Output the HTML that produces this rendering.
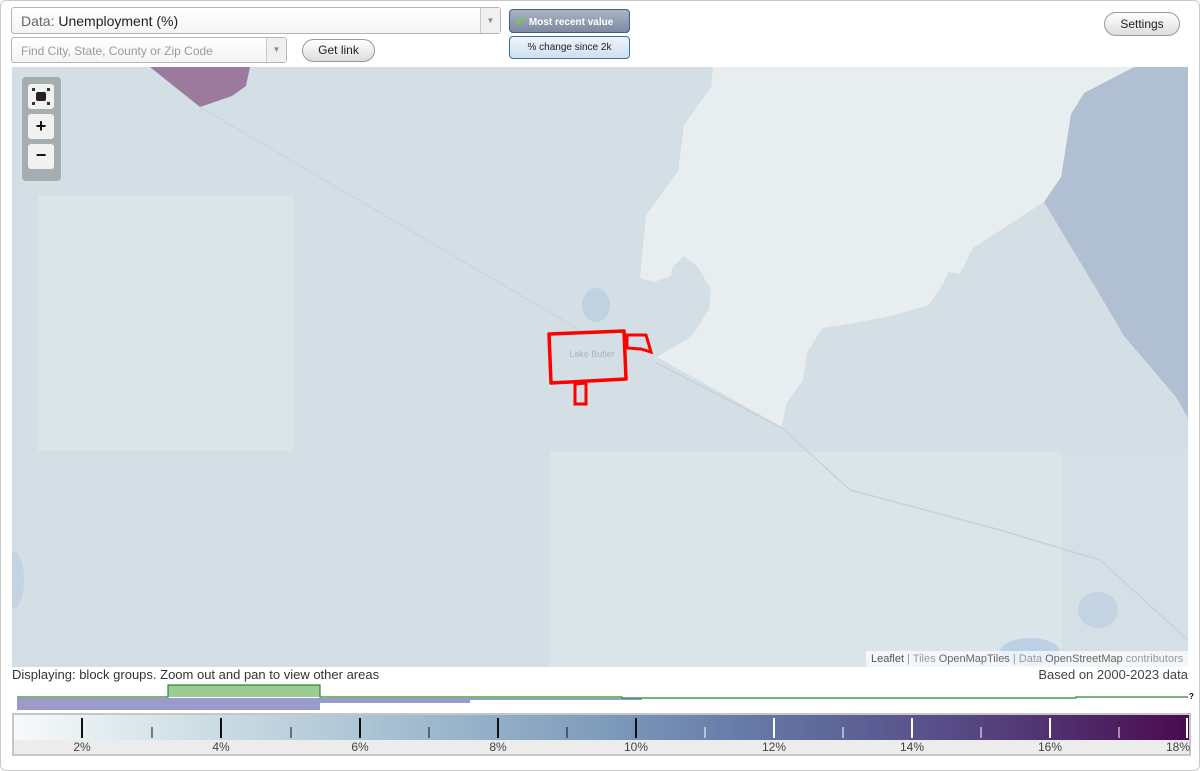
<!DOCTYPE html>
<html><head><meta charset="utf-8"><style>
*{box-sizing:border-box;margin:0;padding:0}
body{width:1200px;height:771px;background:#fff;font-family:"Liberation Sans",sans-serif;position:relative;overflow:hidden}
.frame{position:absolute;left:0;top:0;width:1200px;height:771px;border:1px solid #c8c8c8;border-radius:6px}
.abs{position:absolute}
.sel{border:1px solid #b5b5b5;border-radius:3px;background:linear-gradient(#fff,#f4f4f4);}
.arr{position:absolute;right:0;top:0;bottom:0;width:20px;border-left:1px solid #ccc;background:#f0f0f0;color:#888;font-size:8px;text-align:center}
.pill{border:1px solid #999;border-radius:12px;background:linear-gradient(#fff,#ddd);font-size:12px;color:#222;text-align:center}
.zb{position:absolute;left:6px;width:26px;height:25px;background:#f1f1f1;border-radius:3px;text-align:center;font-weight:bold;color:#111}
.lab{position:absolute;top:740px;font-size:12px;color:#444;transform:translateX(-50%)}
</style></head><body>
<div class="frame"></div>

<div class="abs sel" style="left:11px;top:7px;width:490px;height:27px;font-size:14px;color:#222;padding:5px 9px"><span style="color:#666">Data:</span> Unemployment (%)<div class="arr" style="line-height:25px">▼</div></div>
<div class="abs sel" style="left:11px;top:37px;width:276px;height:26px;font-size:12px;color:#999;padding:6px 9px">Find City, State, County or Zip Code<div class="arr" style="line-height:24px">▼</div></div>
<div class="abs pill" style="left:302px;top:39px;width:73px;height:23px;line-height:21px">Get link</div>
<div class="abs" style="left:509px;top:9px;width:121px;height:24px;border:1px solid #3a5f8f;border-radius:4px;background:linear-gradient(#a9b3c3,#7d8aa0);color:#fff;font-size:10px;font-weight:bold;line-height:22px;padding-left:6px"><span style="color:#7c3;font-size:12px">✔</span> Most recent value</div>
<div class="abs" style="left:509px;top:36px;width:121px;height:23px;border:1px solid #3a6ea5;border-radius:4px;background:linear-gradient(#eef4fb,#cfe0f0);color:#222;font-size:10px;line-height:21px;text-align:center">% change since 2k</div>
<div class="abs pill" style="left:1104px;top:12px;width:76px;height:24px;line-height:22px">Settings</div>

<svg class="abs" style="left:12px;top:67px" width="1176" height="600" viewBox="12 67 1176 600">
<rect x="12" y="67" width="1176" height="600" fill="#d3dfe4"/>
<rect x="38" y="196" width="256" height="255" fill="#dae5ea"/>
<rect x="550" y="452" width="512" height="215" fill="#dae5e9"/>
<rect x="1062" y="452" width="126" height="215" fill="#d5e0e6"/>
<polygon fill="#b0bfd1" points="1134,67 1188,67 1188,418 1176,397 1124,336 1097,290 1044,202 1061,177 1065,152 1071,114 1084,93"/>
<polygon fill="#e8edef" points="713,67 1134,67 1084,93 1071,114 1065,152 1061,177 1044,202 973,248 960,274 948,272 944,282 929,305 891,316 849,324 822,328 807,353 803,380 786,404 782,427 657,357 692,336 709,309 711,290 698,267 684,256 673,267 671,276 654,282 640,278 646,215 678,171 684,125 711,87"/>
<polygon fill="#9c7a9e" points="150,67 250,67 246,86 232,96 200,107"/>
<ellipse cx="596" cy="305" rx="14" ry="17" fill="#c0d2e2"/>
<ellipse cx="1030" cy="652" rx="30" ry="14" fill="#bdd1e6"/>
<ellipse cx="1098" cy="610" rx="20" ry="18" fill="#c3d3e1"/>
<ellipse cx="14" cy="580" rx="10" ry="28" fill="#c3d3e1"/>
<polyline points="200,107 580,330" fill="none" stroke="#c9d5dc" stroke-width="1.2"/>
<polyline points="655,362 782,428 850,490 1000,530 1100,560 1188,640" fill="none" stroke="#c6d2da" stroke-width="1.5"/>
<text x="592" y="357" font-size="9" fill="#aab6bd" text-anchor="middle" font-family="Liberation Sans">Lake Butler</text>
<polygon points="549,334 624,331 626,379 551,383" fill="none" stroke="#f00" stroke-width="3.5" stroke-linejoin="round"/>
<polygon points="575,384 586,383 586,404 575,404" fill="none" stroke="#f00" stroke-width="3"/>
<polygon points="627,335 646,335 651,352 641,349 627,348" fill="none" stroke="#f00" stroke-width="3"/>
</svg>
<div class="abs" style="left:866px;top:651px;width:322px;height:16px;background:rgba(255,255,255,.7);font-size:11px;color:#999;line-height:16px;padding-left:5px"><b style="color:#555;font-weight:normal">Leaflet</b> | Tiles <span style="color:#666">OpenMapTiles</span> | Data <span style="color:#666">OpenStreetMap</span> contributors</div>

<div class="abs" style="left:22px;top:77px;width:39px;height:104px;background:#a4adaf;border-radius:4px">
<div class="zb" style="top:7px"><svg width="26" height="25"><rect x="8" y="8" width="10" height="9" rx="2" fill="#222"/><g fill="#333"><rect x="4" y="4" width="3" height="3"/><rect x="19" y="4" width="3" height="3"/><rect x="4" y="18" width="3" height="3"/><rect x="19" y="18" width="3" height="3"/></g></svg></div>
<div class="zb" style="top:37px;font-size:18px;line-height:24px">+</div>
<div class="zb" style="top:67px;font-size:18px;line-height:22px">−</div>
</div>

<div class="abs" style="left:12px;top:667px;font-size:13px;color:#333">Displaying: block groups. Zoom out and pan to view other areas</div>
<div class="abs" style="right:12px;top:667px;font-size:13px;color:#444">Based on 2000-2023 data</div>

<svg class="abs" style="left:0;top:680px" width="1200" height="34">
<rect x="17" y="18" width="303" height="12" fill="#9b9bcb"/>
<rect x="320" y="18" width="150" height="5" fill="#9b9bcb"/>
<rect x="470" y="18" width="152" height="2" fill="#9b9bcb"/>
<rect x="622" y="18" width="20" height="2" fill="#9b9bcb"/>
<rect x="168" y="5" width="152" height="12" fill="#9ccc96"/>
<polyline points="17,17 168,17 168,5 320,5 320,17 622,17 622,18 1076,18 1076,17 1188,17" fill="none" stroke="#2a8a2a" stroke-width="1.2"/>
<text x="1189" y="19" font-size="8" font-weight="bold" font-family="Liberation Sans">?</text>
</svg>

<div class="abs" style="left:12px;top:713px;width:1179px;height:43px;border:2px solid #c6c6c6;background:#ececec"></div>
<div class="abs" style="left:14px;top:715px;width:1175px;height:25px;background:linear-gradient(90deg,#f7fafb 0%,#d7e4ea 12%,#b6ccd9 26%,#98b4ca 38%,#7f9cbc 50%,#6a80ab 60%,#5d6698 70%,#574b85 80%,#4f2c6a 90%,#4a0a4e 100%)"></div>
<svg class="abs" style="left:0;top:715px" width="1200" height="25">
<g stroke="#111" stroke-width="2"><line x1="82" y1="3" x2="82" y2="23"/><line x1="221" y1="3" x2="221" y2="23"/><line x1="360" y1="3" x2="360" y2="23"/><line x1="498" y1="3" x2="498" y2="23"/><line x1="636" y1="3" x2="636" y2="23"/></g>
<g stroke="#111" stroke-width="1"><line x1="152" y1="12" x2="152" y2="23"/><line x1="291" y1="12" x2="291" y2="23"/><line x1="429" y1="12" x2="429" y2="23"/><line x1="567" y1="12" x2="567" y2="23"/></g>
<g stroke="#fff" stroke-width="2"><line x1="774" y1="3" x2="774" y2="23"/><line x1="912" y1="3" x2="912" y2="23"/><line x1="1050" y1="3" x2="1050" y2="23"/><line x1="1187" y1="3" x2="1187" y2="23"/></g>
<g stroke="#fff" stroke-width="1"><line x1="705" y1="12" x2="705" y2="23"/><line x1="843" y1="12" x2="843" y2="23"/><line x1="981" y1="12" x2="981" y2="23"/><line x1="1119" y1="12" x2="1119" y2="23"/></g>
</svg>
<div class="lab" style="left:82px">2%</div><div class="lab" style="left:221px">4%</div><div class="lab" style="left:360px">6%</div><div class="lab" style="left:498px">8%</div><div class="lab" style="left:636px">10%</div><div class="lab" style="left:774px">12%</div><div class="lab" style="left:912px">14%</div><div class="lab" style="left:1050px">16%</div><div class="lab" style="left:1178px">18%</div>
</body></html>
